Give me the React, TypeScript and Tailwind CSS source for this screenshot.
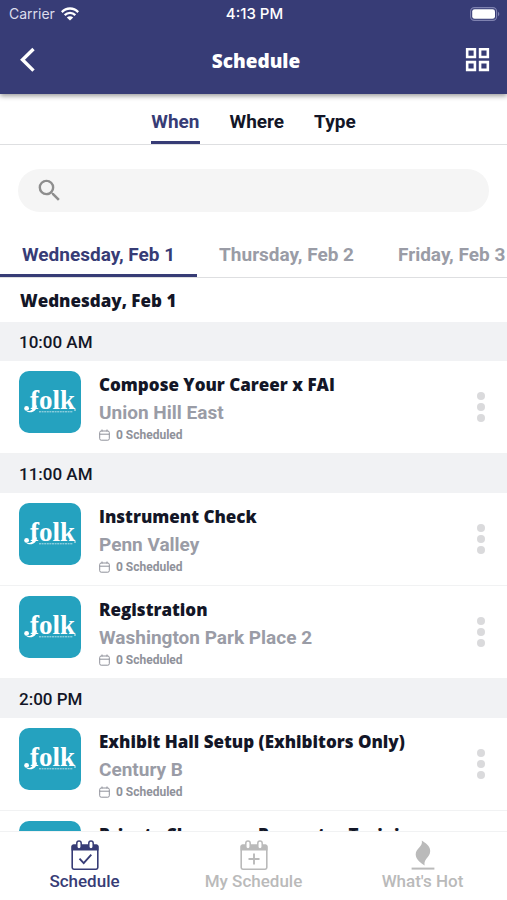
import { useState } from "react";
import { MdGridView, MdSearch } from "react-icons/md";

interface Session {
  id: string;
  title: string;
  place: string;
  scheduled: number;
}

interface TimeSlot {
  time: string;
  sessions: Session[];
}

const filters = ["When", "Where", "Type"];
const days = ["Wednesday, Feb 1", "Thursday, Feb 2", "Friday, Feb 3"];

const slots: TimeSlot[] = [
  {
    time: "10:00 AM",
    sessions: [
      { id: "career", title: "Compose Your Career x FAI", place: "Union Hill East", scheduled: 0 },
    ],
  },
  {
    time: "11:00 AM",
    sessions: [
      { id: "instrument", title: "Instrument Check", place: "Penn Valley", scheduled: 0 },
      { id: "registration", title: "Registration", place: "Washington Park Place 2", scheduled: 0 },
    ],
  },
  {
    time: "2:00 PM",
    sessions: [
      { id: "exhibit", title: "Exhibit Hall Setup (Exhibitors Only)", place: "Century B", scheduled: 0 },
      { id: "showcase", title: "Private Showcase Presenter Training", place: "", scheduled: 0 },
    ],
  },
];

function WifiIcon() {
  return (
    <svg viewBox="0 0 18 14" className="h-3.5 w-[18px]" fill="none" stroke="currentColor" strokeWidth="2.3">
      <path d="M0.8 5.1C5.4 0.3 12.6 0.3 17.2 5.1" />
      <path d="M3.7 8.1C6.7 5 11.3 5 14.3 8.1" />
      <path d="M9 13.6 5.8 10.5C7.6 8.8 10.4 8.8 12.2 10.5Z" fill="currentColor" stroke="none" />
    </svg>
  );
}

function BatteryIcon() {
  return (
    <svg viewBox="0 0 30 14" className="h-3.5 w-[30px]">
      <rect x="0.6" y="0.6" width="26" height="12.8" rx="3.8" fill="none" stroke="#7f82b0" strokeWidth="1.1" />
      <rect x="2.2" y="2.2" width="22.8" height="9.6" rx="2.4" fill="#fff" />
      <path d="M28 4.8c1.8.7 1.8 3.7 0 4.4z" fill="#7f82b0" />
    </svg>
  );
}

function SmallCalendar() {
  return (
    <svg viewBox="0 0 11 12" className="h-3 w-[11px]" fill="none" stroke="currentColor">
      <rect x="0.7" y="2" width="9.6" height="9.2" rx="1.5" />
      <path d="M0.7 5.2h9.6M3 0.5v2M8 0.5v2" />
    </svg>
  );
}

function CalendarIcon({ mark }: { mark: string }) {
  return (
    <svg viewBox="0 0 28 30" className="h-[30px] w-7" fill="none" stroke="currentColor">
      <path d="M2.3 4.5h23.4a1.8 1.8 0 0 1 1.8 1.8V10.4H.5V6.3a1.8 1.8 0 0 1 1.8-1.8z" fill="currentColor" stroke="none" />
      <rect x="1.2" y="5.2" width="25.6" height="24" rx="1.6" strokeWidth="1.6" />
      <rect x="5.8" y="1" width="4.4" height="8" rx="2.2" fill="#fff" strokeWidth="1.5" />
      <rect x="17.8" y="1" width="4.4" height="8" rx="2.2" fill="#fff" strokeWidth="1.5" />
      <path d={mark} strokeWidth="1.9" />
    </svg>
  );
}

function FlameIcon() {
  return (
    <svg viewBox="0 0 28 30" className="h-[30px] w-7" fill="currentColor">
      <path d="M12.8.6c3.6 2.4 8.4 5.4 8.4 10.4c0 3.8-2.2 5.8-4 7.9c-1.5 1.8-2 3.8-1.6 6.5c-3.6-2.2-8.9-6-8.9-11c0-6.2 7.5-7.4 6.1-13.8z" />
      <path d="M2.6 27.6h22.8v2H2.6z" />
    </svg>
  );
}

const navItems = [
  { label: "Schedule", icon: <CalendarIcon mark="M8.5 18.7l4.2 4.4 7.6-8.4" /> },
  { label: "My Schedule", icon: <CalendarIcon mark="M14 13.5v11M8.5 19h11" /> },
  { label: "What's Hot", icon: <FlameIcon /> },
];

function FolkLogo() {
  return (
    <svg viewBox="0 0 62 62" className="size-[62px] shrink-0 rounded-[10px] bg-[#25a2bf]" fill="#fff">
      <text x="11" y="38" className="font-['Liberation_Serif',serif] text-[27px] font-bold">
        folk
      </text>
      <circle cx="7.6" cy="37.4" r="2.4" />
      <path d="M6.5 39.4c4 1.8 7.7-.4 8.2-5h3.3c-.3 6-6.5 9-11.5 5z" />
      <path d="M20 40.8h34" stroke="#fff" strokeWidth="1" strokeDasharray="2 .6" opacity=".65" />
      <circle cx="56" cy="39" r=".8" />
    </svg>
  );
}

function SessionRow({ session }: { session: Session }) {
  return (
    <li className="flex h-[93px] items-start border-b border-[#f1f2f3] py-2.5 pr-5 pl-[19px]">
      <FolkLogo />
      <div className="ml-[18px] flex min-w-0 flex-1 flex-col">
        <h3 className="font-['Open_Sans',sans-serif] text-[17px] leading-7 font-extrabold whitespace-nowrap">
          {session.title}
        </h3>
        <p className="truncate text-[19px] leading-7 font-bold text-[#9a9ca6]">{session.place}</p>
        <p className="flex items-center gap-1.5 text-xs leading-4 font-bold text-[#8f919a]">
          <SmallCalendar />
          {session.scheduled} Scheduled
        </p>
      </div>
      <button
        aria-label={`Options for ${session.title}`}
        className="flex w-3 flex-col items-center gap-[3px] self-center text-[#dadadc]"
      >
        <span className="size-2 rounded-full bg-current" />
        <span className="size-2 rounded-full bg-current" />
        <span className="size-2 rounded-full bg-current" />
      </button>
    </li>
  );
}

export default function App() {
  const [filter, setFilter] = useState("When");
  const [day, setDay] = useState(days[0]);
  const [tab, setTab] = useState("Schedule");

  return (
    <div className="flex h-dvh flex-col overflow-hidden bg-white font-[Roboto,sans-serif] text-[#131627]">
      <header className="relative shrink-0 bg-[#373c76] text-white shadow-[0_2px_5px_rgba(0,0,0,0.4)]">
        <div className="grid h-[27px] grid-cols-3 items-center pr-[7px] pl-[9px] font-[Inter,sans-serif] text-sm leading-none">
          <div className="flex items-center gap-1.5 text-[#dcddec]">
            Carrier
            <span className="text-white">
              <WifiIcon />
            </span>
          </div>
          <span className="text-center text-[15px] font-medium">4:13 PM</span>
          <div className="flex justify-end">
            <BatteryIcon />
          </div>
        </div>
        <div className="flex h-[67px] items-center justify-between pr-3.5 pb-0.5 pl-[18px]">
          <button aria-label="Back" className="flex w-8 justify-start">
            <svg viewBox="0 0 20 26" className="h-[26px] w-5" fill="none" stroke="currentColor" strokeWidth="3.4">
              <path d="M15.5 2L4.5 12.8l11 10.8" />
            </svg>
          </button>
          <h1 className="pt-1 font-['Open_Sans',sans-serif] text-[19px] font-extrabold">Schedule</h1>
          <button aria-label="Menu">
            <MdGridView size={31} />
          </button>
        </div>
      </header>

      <nav className="flex h-[51px] shrink-0 justify-center gap-[30px] border-b border-[#dedfe1] pt-2">
        {filters.map((name) => (
          <button
            key={name}
            onClick={() => setFilter(name)}
            className={`border-b-[3px] pt-0.5 text-[19px] font-bold ${
              filter === name ? "border-[#373c76] text-[#373c76]" : "border-transparent"
            }`}
          >
            {name}
          </button>
        ))}
      </nav>

      <div className="shrink-0 px-[18px] pt-6 pb-[21px]">
        <label className="flex h-[43px] items-center rounded-full bg-[#f5f5f5] pl-[17px] text-[#8e8e8e]">
          <MdSearch size={29} />
          <input type="search" aria-label="Search" className="ml-2 min-w-0 flex-1 bg-transparent outline-none" />
        </label>
      </div>

      <nav className="flex h-[45px] shrink-0 overflow-hidden border-b border-[#dedfe1]">
        {days.map((name) => (
          <button
            key={name}
            onClick={() => setDay(name)}
            className={`shrink-0 border-b-[3px] px-[22px] pt-1 text-[19px] font-bold ${
              day === name ? "border-[#373c76] text-[#373c76]" : "border-transparent text-[#9a9ca6]"
            }`}
          >
            {name}
          </button>
        ))}
      </nav>

      <main className="min-h-0 flex-1 overflow-hidden">
        <h2 className="h-11 px-5 font-['Open_Sans',sans-serif] text-[17px] leading-[46px] font-extrabold">{day}</h2>
        {slots.map((slot) => (
          <section key={slot.time}>
            <h3 className="h-[39px] bg-[#f1f2f4] px-[19px] text-[17px] leading-10 font-medium">{slot.time}</h3>
            <ul>
              {slot.sessions.map((session) => (
                <SessionRow key={session.id} session={session} />
              ))}
            </ul>
          </section>
        ))}
      </main>

      <nav className="grid h-[69px] shrink-0 grid-cols-3 border-t border-[#f1f2f3] bg-white">
        {navItems.map((item) => (
          <button
            key={item.label}
            onClick={() => setTab(item.label)}
            className={`flex flex-col items-center pt-2 text-[17px] leading-[22px] font-medium ${
              tab === item.label ? "text-[#373c76]" : "text-[#bababa]"
            }`}
          >
            {item.icon}
            {item.label}
          </button>
        ))}
      </nav>
    </div>
  );
}
